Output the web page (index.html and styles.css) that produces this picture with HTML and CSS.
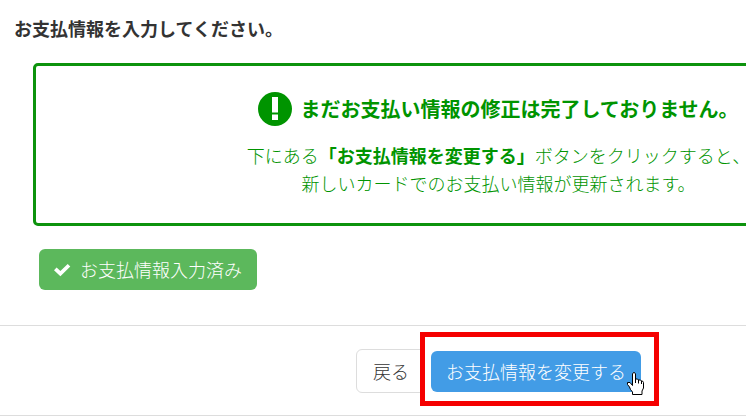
FILE: index.html
```html
<!DOCTYPE html>
<html lang="ja">
<head>
<meta charset="utf-8">
<title>お支払情報</title>
<link rel="stylesheet" href="styles.css">
</head>
<body>
<main class="page">
  <h1 class="heading">お支払情報を入力してください。</h1>
  <section class="notice">
    <h2 class="notice-title">
      <svg class="notice-icon" viewBox="0 0 34 34" aria-hidden="true"><circle cx="17" cy="17" r="17" fill="#009400"/><path d="M14 5h6v15.500h-6zM14 22.500h6v5.500h-6z" fill="#fff"/></svg>
      <span>まだお支払い情報の修正は完了しておりません。</span>
    </h2>
    <p class="notice-text">下にある<strong>「お支払情報を変更する」</strong>ボタンをクリックすると、<br>新しいカードでのお支払い情報が更新されます。</p>
  </section>
  <button type="button" class="btn btn-done">
    <svg class="check" viewBox="0 0 17 14" aria-hidden="true"><path d="M0 7.200 2.600 4.400 6.400 8 13.700 1 16.300 3.600 6.400 13.200z" fill="#fff"/></svg>
    <span>お支払情報入力済み</span>
  </button>
  <footer class="actions">
    <button type="button" class="btn btn-back">戻る</button>
    <div class="focus">
      <button type="button" class="btn btn-submit">お支払情報を変更する</button>
      <svg class="pointer" viewBox="0 0 17 23" aria-hidden="true"><path d="M5.500 13.500V2L6.500.5h1L8.500 2v5h2l1 1h2l1 1h1l1 1.500V16l-1.500 3v3.500H5.500V20L3.500 17.500 2.500 15 .5 12.500V10.500h2.500z" fill="#fff" stroke="#000" stroke-linejoin="round"/><path d="M8.500 7V11M11.500 8V11.500M14.500 9V12" fill="none" stroke="#000"/></svg>
    </div>
  </footer>
</main>
</body>
</html>
```
FILE: styles.css
```css
* {
  box-sizing: border-box;
}

body {
  margin: 0;
  overflow: hidden;
  background: #fff;
  color: #333;
  font-family: "Noto Sans CJK JP", sans-serif;
  font-size: 18px;
  line-height: 28px;
}

.page {
  min-width: 997px;
  padding-top: 14px;
}

.heading {
  margin: 0 14px;
  font-size: 18px;
  font-weight: 700;
}

.notice {
  margin: 21px 33px 23px;
  padding: 26px 16px;
  border: 3px solid #0d930d;
  border-radius: 5px;
  color: #009400;
  text-align: center;
}

.notice-title {
  display: flex;
  align-items: center;
  justify-content: center;
  gap: 8px;
  margin: 0 0 15px;
  font-size: 20px;
  line-height: 34px;
}

.notice-icon {
  width: 34px;
  height: 34px;
}

.notice-text {
  margin: 0;
  font-weight: 300;
}

.notice-text strong {
  font-weight: 700;
}

.btn {
  padding: 0 15px;
  border: 0;
  border-radius: 6px;
  color: #fff;
  font: inherit;
  font-weight: 300;
  line-height: 41px;
  white-space: nowrap;
}

.btn-done {
  display: flex;
  align-items: center;
  gap: 9px;
  margin-left: 39px;
  background: #5cb85c;
}

.check {
  width: 17px;
  height: 14px;
}

.actions {
  display: flex;
  align-items: center;
  justify-content: center;
  gap: 5px;
  margin-top: 35px;
  padding: 23px 0 22px;
  border-top: 1px solid #ddd;
  border-bottom: 1px solid #ddd;
}

.btn-back {
  padding: 0 16px;
  border: 1px solid #ddd;
  background: #fff;
  color: #333;
  line-height: 42px;
}

.focus {
  position: relative;
  display: flex;
}

.focus::before {
  content: "";
  position: absolute;
  inset: -19px -18px -14px -11px;
  border: 5px solid #f50000;
  background: #fff;
}

.btn-submit {
  position: relative;
  background: #429ce6;
}

.pointer {
  position: absolute;
  right: -3px;
  bottom: -3px;
  width: 17px;
  height: 23px;
}
```
